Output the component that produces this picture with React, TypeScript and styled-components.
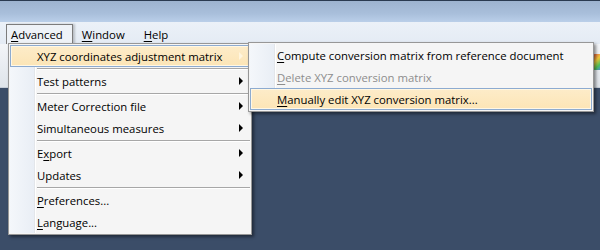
import styled, { createGlobalStyle, css } from "styled-components";

const GlobalStyle = createGlobalStyle`
	html, body {
		margin: 0;
		padding: 0;
		background: #3b4d68;
	}
	body {
		font-family: "Open Sans", "Noto Sans", "Liberation Sans", sans-serif;
		font-size: 11.35px;
		color: #000;
	}
`;

type Entry =
	| { kind: "item"; label: string; key?: number; sub?: boolean; active?: boolean; disabled?: boolean }
	| { kind: "sep" };

const mainMenu: Entry[] = [
	{ kind: "item", label: "XYZ coordinates adjustment matrix", sub: true, active: true },
	{ kind: "sep" },
	{ kind: "item", label: "Test patterns", sub: true },
	{ kind: "sep" },
	{ kind: "item", label: "Meter Correction file", sub: true },
	{ kind: "item", label: "Simultaneous measures", sub: true },
	{ kind: "sep" },
	{ kind: "item", label: "Export", key: 1, sub: true },
	{ kind: "item", label: "Updates", sub: true },
	{ kind: "sep" },
	{ kind: "item", label: "Preferences...", key: 0 },
	{ kind: "item", label: "Language...", key: 0 },
];

const subMenu: Entry[] = [
	{ kind: "item", label: "Compute conversion matrix from reference document", key: 0 },
	{ kind: "item", label: "Delete XYZ conversion matrix", key: 0, disabled: true },
	{ kind: "item", label: "Manually edit XYZ conversion matrix...", key: 0, active: true },
];

const topItems = [
	{ label: "Advanced", open: true },
	{ label: "Window" },
	{ label: "Help" },
];

const Label = ({ text, k }: { text: string; k?: number }) => {
	if (k === undefined) return <>{text}</>;
	return (
		<>
			{text.slice(0, k)}
			<Mn>{text[k]}</Mn>
			{text.slice(k + 1)}
		</>
	);
};

const MenuList = ({ entries }: { entries: Entry[] }) => (
	<>
		{entries.map((e, i) =>
			e.kind === "sep" ? (
				<Separator key={i} />
			) : (
				<Item key={i} $active={e.active} $disabled={e.disabled}>
					<ItemText>
						<Label text={e.label} k={e.key} />
					</ItemText>
					{e.sub && <Arrow $active={e.active} />}
				</Item>
			)
		)}
	</>
);

const App = () => {
	return (
		<Window>
			<GlobalStyle />
			<TitleBar />
			<MenuBar>
				{topItems.map((t) => (
					<TopItem key={t.label} $open={t.open}>
						<Label text={t.label} k={0} />
					</TopItem>
				))}
			</MenuBar>
			<Toolbar>
				<ToolIcon />
			</Toolbar>
			<Workspace />

			<MainMenu>
				<Gutter />
				<MenuList entries={mainMenu} />
			</MainMenu>
			<SubMenu>
				<Gutter />
				<MenuList entries={subMenu} />
			</SubMenu>
		</Window>
	);
};

const Window = styled.div`
	position: relative;
	width: 600px;
	height: 250px;
	overflow: hidden;
	display: flex;
	flex-direction: column;
	background: #3b4d68;
`;

const TitleBar = styled.div`
	height: 22px;
	flex: none;
	box-sizing: border-box;
	border-top: 1px solid #2a3a50;
	background: linear-gradient(#9db3cf, #a9bfdb 60%, #bacfe9);
`;

const MenuBar = styled.div`
	height: 22px;
	flex: none;
	display: flex;
	align-items: flex-end;
	padding-left: 6px;
	gap: 4px;
	background: linear-gradient(#ebf1f8, #e4ebf4);
`;

const TopItem = styled.div<{ $open?: boolean }>`
	height: 20px;
	box-sizing: border-box;
	padding: 2px 9px 0 4px;
	border: 1px solid transparent;
	border-bottom: none;
	line-height: 16px;
	${(p) =>
		p.$open &&
		css`
			border-color: #7c7c7c;
			background: #eef2f7;
			box-shadow: 2px 0 2px rgba(0, 0, 0, 0.2);
			position: relative;
			z-index: 3;
		`}
`;

const Toolbar = styled.div`
	height: 44px;
	flex: none;
	position: relative;
	box-sizing: border-box;
	border-bottom: 1px solid #c5ccd6;
	background: linear-gradient(#f3f5f8, #dfe4ea);
`;

const ToolIcon = styled.div`
	position: absolute;
	right: -6px;
	top: 10px;
	width: 14px;
	height: 16px;
	border-radius: 3px;
	background: linear-gradient(135deg, #e84a4a, #f0c93a 35%, #4fc35a 60%, #4a7de8 85%, #b14ad8);
`;

const Workspace = styled.div`
	flex: 1;
	background: #3b4d68;
`;

const menuBox = css`
	position: absolute;
	z-index: 5;
	box-sizing: border-box;
	display: flex;
	flex-direction: column;
	padding: 1px;
	border: 1px solid #979797;
	background: #f5f5f5;
	box-shadow: 2px 2px 3px rgba(0, 0, 0, 0.45);
`;

const MainMenu = styled.div`
	${menuBox}
	left: 8px;
	top: 43px;
	width: 244px;
`;

const SubMenu = styled.div`
	${menuBox}
	left: 248px;
	top: 42px;
	width: 346px;
	z-index: 6;
`;

const Gutter = styled.div`
	position: absolute;
	left: 1px;
	top: 1px;
	bottom: 1px;
	width: 24px;
	border-right: 1px solid #e3e6ea;
	box-shadow: 1px 0 0 #ffffff;
	background: linear-gradient(to right, #f4f7fb, #e9eef5);
`;

const Item = styled.div<{ $active?: boolean; $disabled?: boolean }>`
	position: relative;
	height: 22px;
	box-sizing: border-box;
	display: flex;
	align-items: center;
	padding: 0 6px 0 26px;
	border: 1px solid transparent;
	color: ${(p) => (p.$disabled ? "#8d8d8d" : "#000")};
	${(p) =>
		p.$active &&
		css`
			border-color: #8dabd0;
			box-shadow: inset 0 0 0 1px #fff7e4;
			background: linear-gradient(#fdecc9, #fce5b6);
		`}
`;

const ItemText = styled.span`
	flex: 1;
	white-space: nowrap;
`;

const Mn = styled.span`
	text-decoration: underline;
	text-underline-offset: 2px;
`;

const Arrow = styled.span<{ $active?: boolean }>`
	width: 0;
	height: 0;
	border-top: 4px solid transparent;
	border-bottom: 4px solid transparent;
	border-left: 4px solid ${(p) => (p.$active ? "#fff5de" : "#000")};
`;

const Separator = styled.div`
	height: 3px;
	box-sizing: border-box;
	margin-left: 27px;
	padding-top: 1px;
	&::before {
		content: "";
		display: block;
		height: 1px;
		background: #a7a7a7;
		box-shadow: 0 1px 0 #ffffff;
	}
`;

export default App;
